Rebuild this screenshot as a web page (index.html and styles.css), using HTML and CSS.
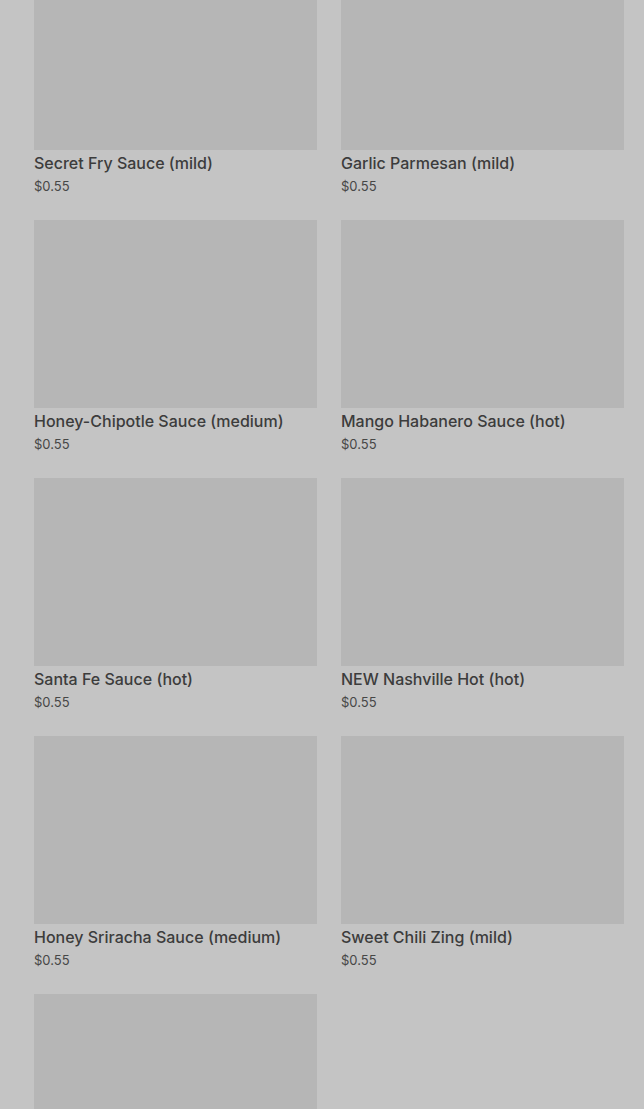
FILE: index.html
```html
<!DOCTYPE html>
<html>
<head>
<meta charset="utf-8">
<link rel="stylesheet" href="styles.css">
</head>
<body>
<div class="grid">
  <div class="card"><div class="img"></div><div class="title">Secret Fry Sauce (mild)</div><div class="price">$0.55</div></div>
  <div class="card"><div class="img"></div><div class="title">Garlic Parmesan (mild)</div><div class="price">$0.55</div></div>
  <div class="card"><div class="img"></div><div class="title">Honey-Chipotle Sauce (medium)</div><div class="price">$0.55</div></div>
  <div class="card"><div class="img"></div><div class="title">Mango Habanero Sauce (hot)</div><div class="price">$0.55</div></div>
  <div class="card"><div class="img"></div><div class="title">Santa Fe Sauce (hot)</div><div class="price">$0.55</div></div>
  <div class="card"><div class="img"></div><div class="title">NEW Nashville Hot (hot)</div><div class="price">$0.55</div></div>
  <div class="card"><div class="img"></div><div class="title">Honey Sriracha Sauce (medium)</div><div class="price">$0.55</div></div>
  <div class="card"><div class="img"></div><div class="title">Sweet Chili Zing (mild)</div><div class="price">$0.55</div></div>
  <div class="card"><div class="img"></div></div>
</div>
</body>
</html>
```
FILE: styles.css
```css
html, body {
  margin: 0;
  padding: 0;
  background: #c4c4c4;
  overflow: hidden;
  height: 1109px;
}
.grid {
  display: grid;
  grid-template-columns: 283px 283px;
  column-gap: 24px;
  row-gap: 25px;
  padding-left: 34px;
  margin-top: -38px;
  font-family: Inter, "Noto Sans", sans-serif;
}
.card {
  display: flex;
  flex-direction: column;
}
.img {
  height: 188px;
  background: #b6b6b6;
}
.title {
  margin-top: 3px;
  font-size: 16px;
  line-height: 20px;
  font-weight: 500;
  color: #3c3c3c;
}
.price {
  margin-top: 4px;
  font-size: 13px;
  line-height: 18px;
  color: #474747;
}
```
